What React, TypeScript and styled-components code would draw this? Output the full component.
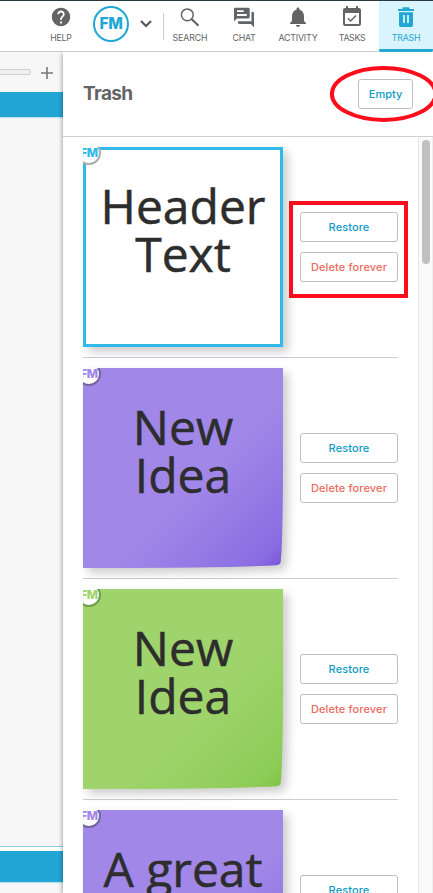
import React from "react";
import styled, { createGlobalStyle, css } from "styled-components";
import { MdHelp, MdNotifications, MdEventAvailable } from "react-icons/md";

const Global = createGlobalStyle`
  * { box-sizing: border-box; }
  body { margin: 0; overflow: hidden; background: #fff; font-family: Inter, sans-serif; }
`;

const Page = styled.div`
  width: 433px;
  height: 893px;
  display: flex;
  flex-direction: column;
  overflow: hidden;
  background: #f7f7f7;
`;

const TopBar = styled.header`
  height: 52px;
  flex: none;
  display: flex;
  padding-left: 34px;
  background: #fff;
  border-top: 1px solid #2a3842;
  border-bottom: 1px solid #cbcbcb;
`;

const NavItem = styled.div<{ $active?: boolean }>`
  width: 54px;
  height: 51px;
  flex: none;
  display: flex;
  flex-direction: column;
  align-items: center;
  padding-top: 5px;
  color: ${(p) => (p.$active ? "#22a7d5" : "#636466")};
  ${(p) =>
    p.$active &&
    css`
      background: #daf4fe;
      border-bottom: 3px solid #22a7d5;
      border-radius: 0 0 2px 2px;
    `}
`;

const IconBox = styled.div`
  height: 22px;
  display: flex;
  align-items: center;
  svg { display: block; }
`;

const NavLabel = styled.span<{ $track: number }>`
  margin-top: 4px;
  font-size: 8.8px;
  line-height: 12px;
  letter-spacing: ${(p) => p.$track}px;
  white-space: nowrap;
`;

const Account = styled.div`
  width: 75px;
  display: flex;
  align-items: flex-start;
  padding: 5px 0 0 5px;
  gap: 11px;
  svg { margin-top: 14px; }
`;

const Avatar = styled.div`
  width: 36px;
  height: 36px;
  border: 2px solid #22a7d5;
  border-radius: 50%;
  color: #22a7d5;
  font: 800 15.5px/32px Inter, sans-serif;
  letter-spacing: -0.3px;
  text-align: center;
`;

const Separator = styled.div`
  width: 1px;
  height: 27px;
  margin: 12px -1px 0 0;
  background: #cfcfcf;
`;

const Workspace = styled.main`
  flex: 1;
  min-height: 0;
  display: flex;
`;

const Canvas = styled.section`
  width: 63px;
  flex: none;
  display: flex;
  flex-direction: column;
`;

const Zoom = styled.div`
  height: 40px;
  flex: none;
  display: flex;
  align-items: center;
  gap: 10px;
`;

const ZoomTrack = styled.div`
  width: 31px;
  height: 6px;
  border: 1px solid #cfcfcf;
  border-left: 0;
  border-radius: 0 3px 3px 0;
  background: #f0f0f0;
`;

const Band = styled.div<{ $height: number }>`
  height: ${(p) => p.$height}px;
  flex: none;
  background: #22a7d5;
  box-shadow: 0 1px 1px #22a7d544;
`;

const Board = styled.div`
  height: 730px;
  flex: none;
  margin-bottom: 4px;
  border-bottom: 1px solid #8bcfe6;
  box-shadow: 0 4px 0 #fff;
`;

const Panel = styled.aside`
  position: relative;
  flex: 1;
  min-width: 0;
  display: flex;
  flex-direction: column;
  background: #fff;
  box-shadow: 0 2px 5px rgba(0, 0, 0, 0.45);
  clip-path: inset(0 0 0 -8px);
`;

const PanelHeader = styled.div`
  height: 85px;
  flex: none;
  display: flex;
  align-items: center;
  justify-content: space-between;
  padding: 0 20px;
  border-bottom: 1px solid #ccd0d4;
`;

const Title = styled.h1`
  margin: 0;
  color: #636466;
  font-size: 19px;
  line-height: 24px;
  font-weight: 700;
  letter-spacing: -0.6px;
`;

const Button = styled.button<{ $danger?: boolean; $narrow?: boolean }>`
  width: ${(p) => (p.$narrow ? 55 : 98)}px;
  height: 30px;
  flex: none;
  padding: 0;
  border: 1px solid #bfbfbf;
  border-radius: 3px;
  background: #fff;
  color: ${(p) => (p.$danger ? "#ed6a5e" : "#0c9bc4")};
  font: 500 11px/28px Inter, sans-serif;
  letter-spacing: ${(p) => (p.$danger ? 0.13 : p.$narrow ? 0 : 0.1)}px;
  white-space: nowrap;
`;

const ListArea = styled.div`
  flex: 1;
  min-height: 0;
  display: flex;
  overflow: hidden;
`;

const List = styled.div`
  width: 355px;
  padding: 10px 20px 0;
`;

const Row = styled.article`
  height: 211px;
  margin-bottom: 10px;
  display: flex;
  align-items: flex-start;
  justify-content: space-between;
  border-bottom: 1px solid #cccdd3;
`;

const Actions = styled.div`
  display: flex;
  flex-direction: column;
  gap: 10px;
  padding-top: 65px;
`;

const Note = styled.div`
  position: relative;
  width: 200px;
  height: 200px;
`;

const NoteShape = styled.svg`
  position: absolute;
  left: 0;
  top: 0;
  overflow: visible;
  filter: drop-shadow(5px 5px 5px rgba(0, 0, 0, 0.2));
`;

const NoteText = styled.div`
  position: relative;
  padding-top: 35px;
  color: #2d2d2d;
  font: 400 48px/48px "Open Sans", "Noto Sans", sans-serif;
  -webkit-text-stroke: 0.5px #2d2d2d;
  text-align: center;
  white-space: pre;
`;

const BadgeClip = styled.div`
  position: absolute;
  left: 0;
  top: 0;
  width: 20px;
  height: 20px;
  overflow: hidden;
`;

const Badge = styled.div<{ $color: string; $ring: string }>`
  width: 24px;
  height: 24px;
  margin: -6px 0 0 -6px;
  border: 2px solid ${(p) => p.$ring};
  border-radius: 50%;
  background: #fff;
  color: ${(p) => p.$color};
  font: 800 12px/20px Inter, sans-serif;
  letter-spacing: -0.3px;
  display: flex;
  justify-content: center;
`;

const ScrollTrack = styled.div`
  width: 15px;
  padding: 3px 0 0 3px;
  border-left: 1px solid #e6e6e6;
  border-right: 1px solid #efefef;
  background: #fafafa;
`;

const ScrollThumb = styled.div`
  width: 8px;
  height: 124px;
  border-radius: 4px;
  background: #c0c0c0;
`;

const Ellipse = styled.svg`
  position: absolute;
  left: 266px;
  top: 13px;
  overflow: visible;
  pointer-events: none;
`;

const Frame = styled.div`
  position: absolute;
  left: 226px;
  top: 149px;
  width: 119px;
  height: 97px;
  border: 4px solid #fc0d1b;
  pointer-events: none;
`;

const SearchIcon = () => (
  <svg width="20" height="20" viewBox="0 0 20 20" fill="none" stroke="currentColor">
    <circle cx="7.3" cy="7.8" r="5.9" strokeWidth="1.5" />
    <path d="M11.5 12l7 6.8" strokeWidth="2.1" />
  </svg>
);

const ChatIcon = () => (
  <svg width="22" height="22" viewBox="0 0 22 22" fill="currentColor">
    <path fillRule="evenodd" d="M1.7 1.7h13.6q1.4 0 1.4 1.4v8q0 1.4-1.4 1.4H3.8L1 15.4V3.1q0-1.4.7-1.4zM4 4.2v1.7h6.7V4.2zM4 8.1v1.8h9.8V8.1z" />
    <path d="M18.5 5.8h1q1.5 0 1.5 1.5v14l-3.2-3.2H6.5q-1.5 0-1.5-1.5v-1.3h13.5z" />
  </svg>
);

const TrashIcon = () => (
  <svg width="18" height="22" viewBox="0 0 18 22" fill="currentColor">
    <path d="M1 3h4.5V2q0-.8.8-.8h5.4q.8 0 .8.8v1H17v2H1z" />
    <path fillRule="evenodd" d="M2 6.2h14v13q0 1.8-1.8 1.8H3.8Q2 21 2 19.2zM6.1 9v8h1.8V9zm4 0v8h1.8V9z" />
  </svg>
);

type NoteData = { text: string; color: string; shade?: [string, string]; ring: string };

const purple: Omit<NoteData, "text"> = { color: "#a087e8", shade: ["#8b6de2", "#7652d8"], ring: "#74639f" };

const notes: NoteData[] = [
  { text: "Header\nText", color: "#31bae9", ring: "#adadad" },
  { text: "New\nIdea", ...purple },
  { text: "New\nIdea", color: "#9fd46c", shade: ["#8dcc57", "#7ec244"], ring: "#719b4b" },
  { text: "A great", ...purple },
];

const curledPaper = "M0 0H200V90Q200 170 197.7 194Q197 197 193 197.3Q150 200 0 200Z";

function StickyNote({ note, id }: { note: NoteData; id: string }) {
  return (
    <Note>
      <NoteShape width="200" height="200" viewBox="0 0 200 200">
        {note.shade ? (
          <>
            <defs>
              <linearGradient id={id} x1="0" y1="0" x2="1" y2="1">
                <stop offset=".58" stopColor={note.color} />
                <stop offset=".92" stopColor={note.shade[0]} />
                <stop offset="1" stopColor={note.shade[1]} />
              </linearGradient>
            </defs>
            <path d={curledPaper} fill={`url(#${id})`} />
          </>
        ) : (
          <rect x="1.5" y="1.5" width="197" height="197" fill="#fff" stroke={note.color} strokeWidth="3" />
        )}
      </NoteShape>
      <NoteText>{note.text}</NoteText>
      <BadgeClip>
        <Badge $color={note.color} $ring={note.ring}>FM</Badge>
      </BadgeClip>
    </Note>
  );
}

export default function App() {
  return (
    <Page>
      <Global />
      <TopBar>
        <NavItem><IconBox><MdHelp size={22} /></IconBox><NavLabel $track={-0.25}>HELP</NavLabel></NavItem>
        <Account>
          <Avatar>FM</Avatar>
          <svg width="12" height="8" viewBox="0 0 12 8" fill="none" stroke="#555" strokeWidth="2">
            <path d="M1 1l5 5 5-5" />
          </svg>
        </Account>
        <Separator />
        <NavItem><IconBox><SearchIcon /></IconBox><NavLabel $track={-0.1}>SEARCH</NavLabel></NavItem>
        <NavItem><IconBox><ChatIcon /></IconBox><NavLabel $track={-0.2}>CHAT</NavLabel></NavItem>
        <NavItem><IconBox><MdNotifications size={24} /></IconBox><NavLabel $track={-0.2}>ACTIVITY</NavLabel></NavItem>
        <NavItem><IconBox><MdEventAvailable size={24} /></IconBox><NavLabel $track={-0.35}>TASKS</NavLabel></NavItem>
        <NavItem $active><IconBox><TrashIcon /></IconBox><NavLabel $track={-0.2}>TRASH</NavLabel></NavItem>
      </TopBar>
      <Workspace>
        <Canvas>
          <Zoom>
            <ZoomTrack />
            <svg width="12" height="13" viewBox="0 0 12 13" stroke="#77787a" strokeWidth="1.6">
              <path d="M0 7h12M6 1v12" />
            </svg>
          </Zoom>
          <Band $height={25} />
          <Board />
          <Band $height={31} />
        </Canvas>
        <Panel>
          <PanelHeader>
            <Title>Trash</Title>
            <Button $narrow>Empty</Button>
          </PanelHeader>
          <ListArea>
            <List>
              {notes.map((note, i) => (
                <Row key={i}>
                  <StickyNote note={note} id={`shade-${i}`} />
                  <Actions>
                    <Button>Restore</Button>
                    <Button $danger>Delete forever</Button>
                  </Actions>
                </Row>
              ))}
            </List>
            <ScrollTrack><ScrollThumb /></ScrollTrack>
          </ListArea>
          <Ellipse width="110" height="58" fill="none" stroke="#fc0d1b" strokeWidth="4">
            <ellipse cx="54.7" cy="28.9" rx="51.8" ry="26" />
          </Ellipse>
          <Frame />
        </Panel>
      </Workspace>
    </Page>
  );
}
